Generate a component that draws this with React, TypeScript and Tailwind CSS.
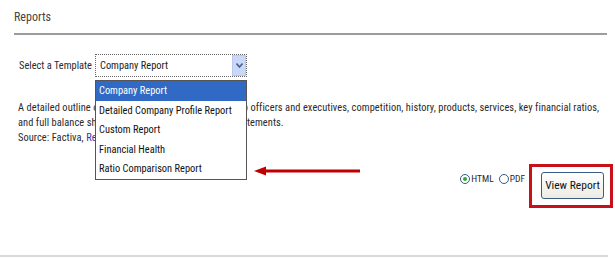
const options = [
  "Company Report",
  "Detailed Company Profile Report",
  "Custom Report",
  "Financial Health",
  "Ratio Comparison Report",
];

function Radio({ checked, label }: { checked?: boolean; label: string }) {
  return (
    <label className="flex items-center">
      <span className="flex h-[10px] w-[10px] items-center justify-center rounded-full border border-[#2f5d8a] bg-white">
        {checked && <span className="h-[4px] w-[4px] rounded-full bg-[#2fa82f]" />}
      </span>
      <span className="ml-[1px] text-[9.5px] text-[#2a2a2a]">{label}</span>
    </label>
  );
}

export default function App() {
  return (
    <div className="relative h-[259px] w-[615px] overflow-hidden bg-white font-['Roboto_Condensed','Liberation_Sans',sans-serif] text-[10.4px] font-normal text-[#2a2a2a]">
      <div className="pl-[14px] pt-[10px] leading-[14px] text-[12px] text-[#444]">Reports</div>
      <div className="ml-[14px] mr-[8px] mt-[9px] h-[2px] bg-[#9c9c9c]" />

      <div className="mt-[19px] flex items-center pl-[19px]">
        <span className="w-[76px]">Select a Template</span>
        <div className="flex h-[23px] w-[152px] items-center border border-dotted border-[#666] bg-white">
          <span className="flex-1 pl-[4px] text-[#222]">Company Report</span>
          <span className="flex h-[21px] w-[14px] items-center justify-center border border-[#b9c9ef] bg-[#c9d7f8]">
            <svg width="7" height="5" viewBox="0 0 7 5">
              <polyline points="0.5,0.5 3.5,4 6.5,0.5" fill="none" stroke="#4a5f8c" strokeWidth="1.6" />
            </svg>
          </span>
        </div>
      </div>

      <p className="mt-[23px] whitespace-nowrap pl-[18px] leading-[15px] tracking-[0.065px]">
        A detailed outline of a company's business info and top officers and executives, competition, history, products, services, key financial ratios,
        <br />
        and full balance sheet, income statement, cashflow statements.
        <br />
        Source: Factiva, <span className="text-[#3333aa]">Reuters</span>
      </p>

      <div className="mt-[19px] flex justify-end pr-[2px]">
        <div className="mr-[4px] mt-[8px] flex items-start gap-[5px]">
          <Radio checked label="HTML" />
          <Radio label="PDF" />
        </div>
        <div className="border-[3px] border-[#c8101a] pb-[6px] pl-[9px] pr-[6px] pt-[5px]">
          <button className="h-[27px] w-[63px] rounded-[3px] border border-[#3d5b86] bg-gradient-to-b from-white to-[#ecebe4] text-[11.5px] text-[#111]">
            View Report
          </button>
        </div>
      </div>

      <div className="mt-[47px] h-[2px] w-[608px] bg-[#d9d9de]" />

      <ul className="absolute left-[95px] top-[80px] w-[152px] border border-[#555] bg-white">
        {options.map((o, i) => (
          <li
            key={o}
            className={
              i === 0
                ? "h-[19.5px] bg-[#316ac5] pl-[3px] leading-[19.5px] text-white"
                : "h-[19.5px] pl-[3px] leading-[19.5px] text-[#111]"
            }
          >
            {o}
          </li>
        ))}
      </ul>

      <svg className="absolute left-[253px] top-[164px]" width="110" height="14" viewBox="0 0 110 14">
        <line x1="10" y1="7" x2="107" y2="7" stroke="#c00000" strokeWidth="3" />
        <polygon points="1,7 13,2.5 13,11.5" fill="#c00000" />
      </svg>
    </div>
  );
}
